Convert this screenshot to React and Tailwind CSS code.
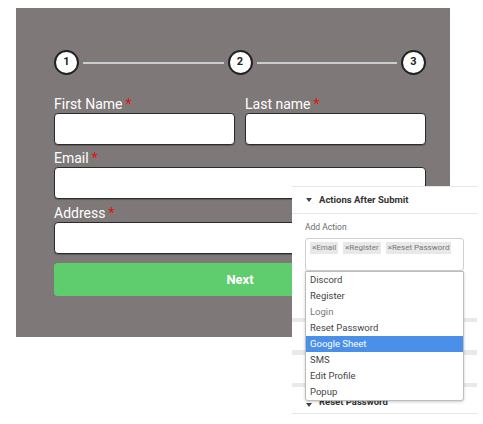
import React from "react";

const steps = [1, 2, 3];

const actions = [
  "Discord",
  "Register",
  "Login",
  "Reset Password",
  "Google Sheet",
  "SMS",
  "Edit Profile",
  "Popup",
];

const Caret = () => (
  <svg width="6" height="4" viewBox="0 0 6 4" className="shrink-0">
    <path d="M0 0h6L3 4z" fill="#444" />
  </svg>
);

const Field = ({ label, className = "" }) => (
  <div className={"flex flex-col " + className}>
    <label className="text-[14px] leading-[17px] text-white">
      {label}
      <span className="text-[#e3120b] ml-[3px]">*</span>
    </label>
    <input
      type="text"
      className="h-[32px] w-full rounded-[4px] border border-[#2b2b2b] bg-white shadow-[0_1px_1px_rgba(0,0,0,0.25)] outline-none"
    />
  </div>
);

const ActionsPanel = () => (
  <div className="absolute left-[292px] top-[186px] w-[185px] bg-white font-['Roboto',sans-serif]">
    <div className="h-[28px] flex items-center gap-[7px] px-[14px] border-t border-b border-[#e6e6e6]">
      <Caret />
      <span className="text-[9.5px] font-bold text-[#333]">Actions After Submit</span>
    </div>
    <div className="px-[13px] pt-[7px]">
      <p className="text-[8.5px] leading-[12px] text-[#6b6b6b]">Add Action</p>
      <div className="relative mt-[5px]">
        <div className="h-[33px] rounded-[3px] border border-[#cfcfcf] flex items-start gap-[5px] px-[4px] pt-[3px]">
          <span className="bg-[#e8e8e8] px-[2px] text-[8px] leading-[12px] text-[#777]">×Email</span>
          <span className="bg-[#e8e8e8] px-[2px] text-[8px] leading-[12px] text-[#777]">×Register</span>
          <span className="bg-[#e8e8e8] px-[2px] text-[8px] leading-[12px] text-[#777]">×Reset Password</span>
        </div>
        <ul className="absolute left-0 top-full w-full bg-white border border-[#bdbdbd] rounded-b-[3px] shadow-[0_1px_3px_rgba(0,0,0,0.2)] z-10">
          {actions.map((a) => (
            <li
              key={a}
              className={
                "h-[16px] px-[4px] flex items-center text-[9.5px] " +
                (a === "Google Sheet"
                  ? "bg-[#4a8fe8] text-white"
                  : a === "Login"
                  ? "text-[#777]"
                  : "text-[#444]")
              }
            >
              {a}
            </li>
          ))}
        </ul>
      </div>
    </div>
    <div className="h-[47px]" />
    <div className="h-[4px] bg-[#e9e9e9]" />
    <div className="h-[28px]" />
    <div className="h-[5px] bg-[#e9e9e9]" />
    <div className="h-[28px]" />
    <div className="h-[4px] bg-[#e9e9e9]" />
    <div className="h-[27px] flex items-end pb-[6px] gap-[7px] px-[14px] border-b border-[#e6e6e6]">
      <Caret />
      <span className="text-[9.5px] leading-[11px] font-bold text-[#333]">Reset Password</span>
    </div>
  </div>
);

export default function App() {
  return (
    <div className="relative w-[483px] h-[424px] bg-white overflow-hidden font-['Roboto',sans-serif]">
      <div className="ml-[16px] mt-[8px] w-[434px] h-[329px] bg-[#7e7878] pl-[38px] pr-[24px] pt-[42px]">
        <div className="flex items-center">
          {steps.map((n, i) => (
            <React.Fragment key={n}>
              <div className="w-[25px] h-[25px] shrink-0 rounded-full bg-white border-2 border-[#222] flex items-center justify-center text-[11px] font-bold text-[#222]">
                {n}
              </div>
              {i < steps.length - 1 && <div className="flex-1 h-[2px] mx-[4px] bg-[#c5cfcf]" />}
            </React.Fragment>
          ))}
        </div>
        <div className="mt-[21px] flex gap-[10px]">
          <Field label="First Name" className="flex-1" />
          <Field label="Last name" className="flex-1" />
        </div>
        <Field label="Email" className="mt-[5px]" />
        <Field label="Address" className="mt-[6px]" />
        <button
          type="button"
          className="mt-[9px] w-full h-[33px] rounded-[4px] bg-[#5fcc6e] text-white text-[13px] font-bold"
        >
          Next
        </button>
      </div>
      <ActionsPanel />
    </div>
  );
}
